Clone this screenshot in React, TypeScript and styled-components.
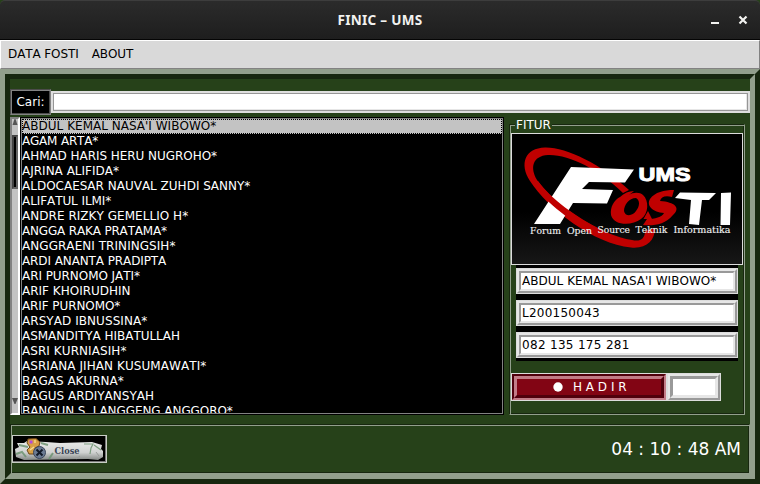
import React from "react";
import styled, { createGlobalStyle, css } from "styled-components";

const GREEN = "#264119";
const LIGHT = "#929f8c";
const DARK = "#17270f";

const Global = createGlobalStyle`
  * { box-sizing: border-box; }
  body { margin: 0; background: #000; }
`;

const Window = styled.div`
  width: 760px;
  height: 484px;
  display: flex;
  flex-direction: column;
  overflow: hidden;
  font-family: "DejaVu Sans", sans-serif;
  font-size: 12px;
  font-kerning: none;
  color: #fff;
  background: ${GREEN};
`;

const TitleBar = styled.header`
  height: 40px;
  flex: none;
  display: grid;
  grid-template-columns: 1fr auto 1fr;
  align-items: center;
  border-radius: 5px 5px 0 0;
  background: linear-gradient(#2b2b2b, #1e1e1e);
  border-top: 1px solid #3d3d3d;
  border-bottom: 1px solid #050505;
`;

const Title = styled.h1`
  grid-column: 2;
  margin: 0;
  font: bold 13.5px/20px "Noto Sans", sans-serif;
  letter-spacing: 0.3px;
  color: #f2f2f0;
`;

const WindowButtons = styled.div`
  display: flex;
  justify-content: flex-end;
  padding-right: 12px;
`;

const MenuBar = styled.nav`
  height: 29px;
  flex: none;
  display: flex;
  gap: 13px;
  padding-left: 7px;
  line-height: 27px;
  letter-spacing: -0.1px;
  color: #000;
  background: #d9d9d9;
  border: 1px solid;
  border-color: #fff #828282 #828282 #fff;
`;

const Bevel = styled.div`
  flex: 1;
  min-height: 0;
  border: 5px solid;
  border-color: ${LIGHT} ${DARK} ${DARK} ${LIGHT};
`;

const Content = styled.main`
  height: 100%;
  display: flex;
  flex-direction: column;
  border: 5px solid;
  border-color: ${DARK} ${LIGHT} ${LIGHT} ${DARK};
  padding-top: 10px;
`;

const SearchRow = styled.div`
  display: flex;
  align-items: center;
  height: 26px;
  flex: none;
`;

const SearchLabel = styled.label`
  width: 41px;
  height: 26px;
  line-height: 22px;
  text-align: center;
  background: #000;
  border: 1px solid;
  border-color: #4c4c4c #828282 #828282 #4c4c4c;
  box-shadow: inset 1px 1px 0 #828282, inset -1px -1px 0 #4c4c4c;
  padding-top: 1px;
`;

const SearchInput = styled.div`
  flex: 1;
  height: 22px;
  background: #fff;
  border: 2px solid #dedede;
  box-shadow: inset 0 0 0 1px #969696, inset -2px -2px 0 #e6e6e6;
`;

const Columns = styled.div`
  display: flex;
  flex: none;
  height: 298px;
  margin-top: 2px;
`;

const ScrollBar = styled.div`
  width: 10px;
  display: flex;
  flex-direction: column;
  background: #c3c3c3;
  border: 2px solid;
  border-color: #828282 #fff #fff #828282;
`;

const ScrollThumb = styled.div`
  height: 54px;
  background: #000;
  border: 2px solid;
  border-color: #444 #666 #666 #444;
`;

const ScrollArrow = styled.svg`
  display: block;
  width: 6px;
  height: 16px;
  flex: none;
`;

const Spacer = styled.div`
  flex: 1;
`;

const List = styled.ul`
  width: 484px;
  margin: 0;
  list-style: none;
  overflow: hidden;
  background: #000;
  border: 1px solid #000;
  box-shadow: inset 0 0 0 1px #828282;
  padding: 1px;
`;

const ListItem = styled.li<{ $selected?: boolean; $tracking: number }>`
  height: 15px;
  line-height: 15px;
  letter-spacing: ${(p) => p.$tracking}px;
  white-space: pre;
  ${(p) =>
    p.$selected &&
    css`
      color: #000;
      background: #c3c3c3;
      outline: 1px dotted #000;
      outline-offset: -1px;
    `}
`;

const ListView = styled.div`
  height: 294px;
  overflow: hidden;
`;

const groove = css`
  border: 1px solid;
  border-color: ${DARK} ${LIGHT} ${LIGHT} ${DARK};
  box-shadow: inset 1px 1px 0 ${LIGHT}, inset -1px -1px 0 ${DARK};
`;

const Feature = styled.section`
  width: 236px;
  height: 291px;
  margin: 7px 0 0 5px;
  padding: 1px;
  display: flex;
  flex-direction: column;
  ${groove}
`;

const FeatureTitle = styled.h2`
  align-self: flex-start;
  height: 14px;
  margin: -8px 0 1px 4px;
  padding: 0 1px;
  background: ${GREEN};
  font: 12px/14px "DejaVu Sans", sans-serif;
`;

const Logo = styled.svg`
  display: block;
  flex: none;
  width: 232px;
  height: 132px;
  border: 1px solid #dcdcdc;
`;

const Fields = styled.div`
  width: 222px;
  height: 96px;
  margin-left: 5px;
  padding: 3px 0;
  display: flex;
  flex-direction: column;
  gap: 6px;
  background: #000;
`;

const Ridge = styled.div<{ $w: number }>`
  width: ${(p) => p.$w}px;
  border: 1px solid #dcdcdc;
  color: #000;

  & > div {
    height: 100%;
    border: 2px solid;
    border-color: #e6e6e6 #999 #999 #e6e6e6;
  }
  & > div > div {
    height: 100%;
    background: #fff;
    border: 2px solid;
    border-color: #999 #e6e6e6 #e6e6e6 #999;
    padding-left: 1px;
    line-height: 16px;
    white-space: pre;
  }
`;

const Field = styled(Ridge)<{ $tracking: number }>`
  height: 26px;
  letter-spacing: ${(p) => p.$tracking}px;
`;

const CheckBox = styled(Ridge)`
  height: 28px;
  & > div > div {
    border-width: 3px;
  }
`;

const Actions = styled.div`
  display: flex;
  margin-top: 12px;
`;

const PresentButton = styled.div`
  width: 156px;
  height: 28px;
  border: 1px solid #dcdcdc;

  & > div {
    height: 100%;
    border: 2px solid;
    border-color: #50000c #c27c87 #c27c87 #50000c;
  }
  & > div > div {
    height: 100%;
    display: flex;
    align-items: center;
    padding-left: 36px;
    gap: 10px;
    background: #820514;
    border: 3px solid;
    border-color: #c27c87 #50000c #50000c #c27c87;
    white-space: pre;
  }
`;

const Dot = styled.svg`
  width: 10px;
  height: 10px;
  flex: none;
`;

const Footer = styled.footer`
  height: 50px;
  flex: none;
  margin-top: 9px;
  padding: 0 8px 0 1px;
  display: flex;
  align-items: center;
  justify-content: space-between;
  ${groove}
`;

const CloseButton = styled.button`
  width: 95px;
  height: 28px;
  padding: 1px;
  background: #000;
  border: 1px solid #c8cdc5;
  box-shadow: inset -1px -1px 0 #777;
`;

const StoneArt = styled.svg`
  display: block;
  width: 91px;
  height: 24px;
`;

const Clock = styled.time`
  font-size: 17px;
  line-height: 20px;
  white-space: pre;
`;

const names: [string, number][] = [
  ["ABDUL KEMAL NASA'I WIBOWO*", 0.03],
  ["AGAM ARTA*", -0.2],
  ["AHMAD HARIS HERU NUGROHO*", -0.05],
  ["AJRINA ALIFIDA*", 0],
  ["ALDOCAESAR NAUVAL ZUHDI SANNY*", 0],
  ["ALIFATUL ILMI*", -0.08],
  ["ANDRE RIZKY GEMELLIO H*", 0.04],
  ["ANGGA RAKA PRATAMA*", -0.17],
  ["ANGGRAENI TRININGSIH*", 0.05],
  ["ARDI ANANTA PRADIPTA", -0.1],
  ["ARI PURNOMO JATI*", -0.06],
  ["ARIF KHOIRUDHIN", 0],
  ["ARIF PURNOMO*", -0.09],
  ["ARSYAD IBNUSSINA*", 0.06],
  ["ASMANDITYA HIBATULLAH", -0.03],
  ["ASRI KURNIASIH*", 0.07],
  ["ASRIANA JIHAN KUSUMAWATI*", 0.07],
  ["BAGAS AKURNA*", 0],
  ["BAGUS ARDIYANSYAH", 0],
  ["BANGUN S. LANGGENG ANGGORO*", -0.07],
];

const details: [string, number][] = [
  ["ABDUL KEMAL NASA'I WIBOWO*", 0.03],
  ["L200150043", 0.25],
  ["082 135 175 281", 0.31],
];

const motto = [
  { word: "Forum", x: 530, y: 233.5, w: 31 },
  { word: "Open", x: 567, y: 233.5, w: 25 },
  { word: "Source", x: 597.5, y: 233, w: 32.5 },
  { word: "Teknik", x: 635.5, y: 233, w: 32 },
  { word: "Informatika", x: 673.5, y: 232.5, w: 57 },
];

function FostiLogo() {
  return (
    <Logo viewBox="512 134 230 130">
      <defs>
        <linearGradient id="logoBg" x1="0" y1="0" x2="0" y2="1">
          <stop offset="0.6" stopColor="#000" />
          <stop offset="1" stopColor="#171717" />
        </linearGradient>
      </defs>
      <rect x="512" y="134" width="230" height="130" fill="url(#logoBg)" />
      <path
        d="M629 190 C601 164 566 147 545 147.500 C525 148 519 164 530 181 C548 209 594 244 631 247.500 C646 249 655 241 655 228 L645 231 C645 239 640 242 632 240 C602 236 554 205 537 180 C530 168 532 156 548 155 C568 154 599 169 623 193 Z"
        fill="#c00000"
      />
      <path d="M571 167 L634 169.500 L625 182.500 L589 182 L582 189 L613 190 L607 203.500 L573 203 L560 224 L534 224 Z" fill="#fff" />
      <path d="M531 181 C542 199 567 219 594 234 L602 230 C576 217 551 199 538 181 Z" fill="#c00000" />
      <path
        fillRule="evenodd"
        d="M620 197 C624 193 629 191 634 191 L629 195 C633 192 640 192 643 195 C649 200 649 214 641 219 C632 226 614 226 611 215 C610 207 614 200 620 197 Z M636 198 C629 198 624 205 624 211 C625 217 633 216 636 211 C640 206 640 200 636 198 Z"
        fill="#c00000"
      />
      <path
        d="M674 190 L672 197 C665 195 661 197 660 201 C675 202 681 208 673 215 C665 225 653 226 643 225 L647 219 C655 219 662 217 664 213 C653 212 646 206 650 199 C655 192 664 190 674 190 Z"
        fill="#c00000"
      />
      <path d="M648 211 L652 219 L643.500 219 Z" fill="#c00000" />
      <path d="M680 192.500 L716 193 L709 200 L702 200 L699 225 L689 224 L691 200 L675 198 Z M721 193 L731 192.500 L730 225 L720.500 225 Z" fill="#fff" />
      <text x="638.500" y="181" textLength="52" lengthAdjust="spacingAndGlyphs" fontFamily="Liberation Sans, sans-serif" fontWeight="bold" fontSize="17.5" fill="#fff" stroke="#fff" strokeWidth="0.9">
        UMS
      </text>
      {motto.map((m) => (
        <text key={m.word} x={m.x} y={m.y} textLength={m.w} lengthAdjust="spacingAndGlyphs" fontFamily="DejaVu Serif, serif" fontSize="9.5" fill="#f0f0f0" stroke="#f0f0f0" strokeWidth="0.15">
          {m.word}
        </text>
      ))}
    </Logo>
  );
}

function StoneClose() {
  return (
    <StoneArt viewBox="14 437 91 24">
      <defs>
        <linearGradient id="stone" x1="0" y1="0" x2="0" y2="1">
          <stop offset="0" stopColor="#e9eae9" />
          <stop offset="0.6" stopColor="#d0d2d1" />
          <stop offset="1" stopColor="#858986" />
        </linearGradient>
      </defs>
      <path d="M15 449 L19 447 L17 443 L24 443 L27 441 L46 442 L60 443 L92 442 L102 445 L101 449 L103 451 L103 457 L98 460 L88 459 L24 460 L16 457 Z" fill="url(#stone)" />
      <g fill="none" stroke="#6e9472" strokeWidth="2" opacity="0.85">
        <path d="M19 445 L28 447 M16 454 L22 452 L26 457" />
        <path d="M49 459 L53 453 M41 443 L48 445" />
        <path d="M84 444 L93 444 L91 448 L90 454 M94 445 L101 450" strokeWidth="1.200" />
      </g>
      <path d="M96 452 L99 456 M76 459 L80 456" stroke="#9a9d9b" />
      <path d="M28 439 L36 438.500 L40 442 L39 446 L35 448 L36 454 L29 454 L27 450 L30 447 L27 443 Z" fill="#d8a045" stroke="#6e4618" />
      <path d="M29.500 440.500 h3 v3 h-3 Z" fill="#b24ae0" />
      <path d="M30 450 L34 447 M35 440 V443" stroke="#f6df92" strokeWidth="1.300" />
      <circle cx="39.500" cy="452.500" r="6" fill="#6b7b93" stroke="#39445a" />
      <path d="M36.500 449.500 L42.500 455.500 M42.500 449.500 L36.500 455.500" stroke="#131a28" strokeWidth="2" />
      <text x="54.500" y="454" textLength="25" lengthAdjust="spacingAndGlyphs" fontFamily="DejaVu Serif, serif" fontWeight="bold" fontSize="9.5" fill="#3a4556">
        Close
      </text>
    </StoneArt>
  );
}

export default function App() {
  return (
    <Window>
      <Global />
      <TitleBar>
        <Title>FINIC – UMS</Title>
        <WindowButtons>
          <svg width="38" height="12" viewBox="0 0 38 12">
            <path d="M1 8h8v2H1Z" fill="#f2f2f0" />
            <path d="M29.500 2.500 L36.500 9.500 M36.500 2.500 L29.500 9.500" stroke="#f2f2f0" strokeWidth="2.200" />
          </svg>
        </WindowButtons>
      </TitleBar>
      <MenuBar>
        <span>DATA FOSTI</span>
        <span>ABOUT</span>
      </MenuBar>
      <Bevel>
        <Content>
          <SearchRow>
            <SearchLabel>Cari:</SearchLabel>
            <SearchInput />
          </SearchRow>
          <Columns>
            <ScrollBar>
              <ScrollArrow viewBox="0 0 6 16">
                <path d="M2.500 0 H3.500 L5.500 6 H0.500 Z" fill="#555" />
              </ScrollArrow>
              <ScrollThumb />
              <Spacer />
              <ScrollArrow viewBox="0 0 6 16">
                <path d="M0 1 H6 L3.500 7 H2.500 Z" fill="#555" />
              </ScrollArrow>
            </ScrollBar>
            <List>
              <ListView>
                {names.map(([name, tracking], i) => (
                  <ListItem key={name} $tracking={tracking} $selected={i === 0}>
                    {name}
                  </ListItem>
                ))}
              </ListView>
            </List>
            <Feature>
              <FeatureTitle>FITUR</FeatureTitle>
              <FostiLogo />
              <Fields>
                {details.map(([value, tracking]) => (
                  <Field key={value} $w={222} $tracking={tracking}>
                    <div>
                      <div>{value}</div>
                    </div>
                  </Field>
                ))}
              </Fields>
              <Actions>
                <PresentButton>
                  <div>
                    <div>
                      <Dot viewBox="0 0 10 10">
                        <circle cx="5" cy="5" r="4.700" fill="#fff" />
                      </Dot>
                      H A D I R
                    </div>
                  </div>
                </PresentButton>
                <CheckBox $w={54}>
                  <div>
                    <div />
                  </div>
                </CheckBox>
              </Actions>
            </Feature>
          </Columns>
          <Footer>
            <CloseButton aria-label="Close">
              <StoneClose />
            </CloseButton>
            <Clock>04 : 10 : 48 AM</Clock>
          </Footer>
        </Content>
      </Bevel>
    </Window>
  );
}
